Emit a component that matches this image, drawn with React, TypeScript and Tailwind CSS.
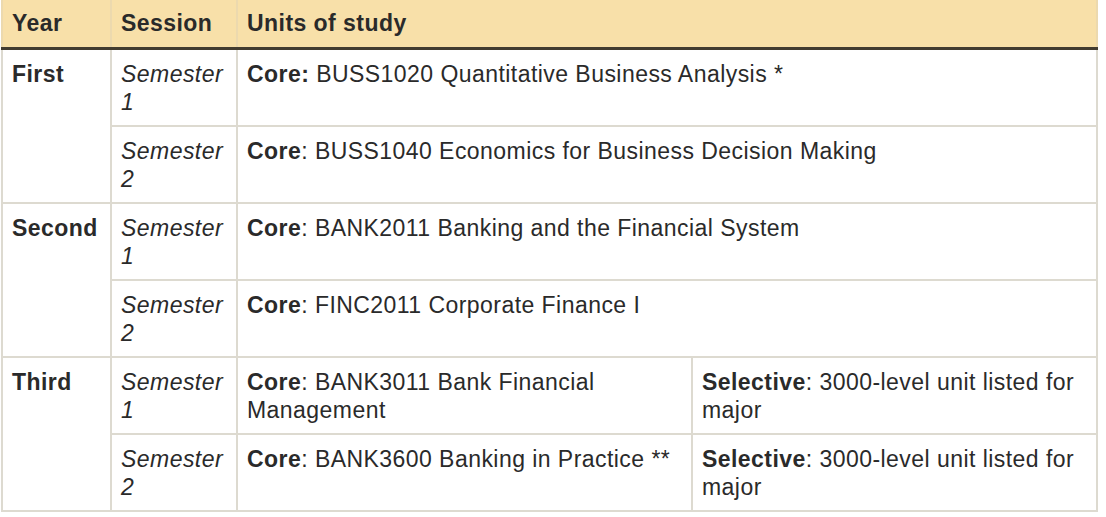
import React from "react";

const cell = "border-2 border-[#dddad0] align-top px-[9px] pt-[10px] pb-[9px]";
const head = "text-left font-bold px-[9px] pt-[9px] pb-[10px] border-x-2 border-[#ecd9ae] border-b-[3px] border-b-[#423c30]";

function Session({ n }: { n: string }) {
  return (
    <td className={cell + " italic"}>
      Semester
      <br />
      {n}
    </td>
  );
}

export default function App() {
  return (
    <div className="bg-white w-[1106px] h-[517px] overflow-hidden" style={{ fontFamily: '"Liberation Sans", Arial, sans-serif' }}>
      <table className="ml-[1px] w-[1097px] border-collapse text-[23px] leading-[28px] tracking-[0.45px] text-[#2a2a2a] table-fixed">
        <colgroup>
          <col className="w-[109px]" />
          <col className="w-[126px]" />
          <col className="w-[455px]" />
          <col />
        </colgroup>
        <thead>
          <tr className="bg-[#f8e0a9]">
            <th className={head}>Year</th>
            <th className={head}>Session</th>
            <th colSpan={2} className={head}>Units of study</th>
          </tr>
        </thead>
        <tbody>
          <tr>
            <td rowSpan={2} className={cell + " font-bold"}>First</td>
            <Session n="1" />
            <td colSpan={2} className={cell}><b>Core:</b> BUSS1020 Quantitative Business Analysis *</td>
          </tr>
          <tr>
            <Session n="2" />
            <td colSpan={2} className={cell}><b>Core</b>: BUSS1040 Economics for Business Decision Making</td>
          </tr>
          <tr>
            <td rowSpan={2} className={cell + " font-bold"}>Second</td>
            <Session n="1" />
            <td colSpan={2} className={cell}><b>Core</b>: BANK2011 Banking and the Financial System</td>
          </tr>
          <tr>
            <Session n="2" />
            <td colSpan={2} className={cell}><b>Core</b>: FINC2011 Corporate Finance I</td>
          </tr>
          <tr>
            <td rowSpan={2} className={cell + " font-bold"}>Third</td>
            <Session n="1" />
            <td className={cell}><b>Core</b>: BANK3011 Bank Financial Management</td>
            <td className={cell}><b>Selective</b>: 3000-level unit listed for major</td>
          </tr>
          <tr>
            <Session n="2" />
            <td className={cell}><b>Core</b>: BANK3600 Banking in Practice **</td>
            <td className={cell}><b>Selective</b>: 3000-level unit listed for major</td>
          </tr>
        </tbody>
      </table>
    </div>
  );
}
